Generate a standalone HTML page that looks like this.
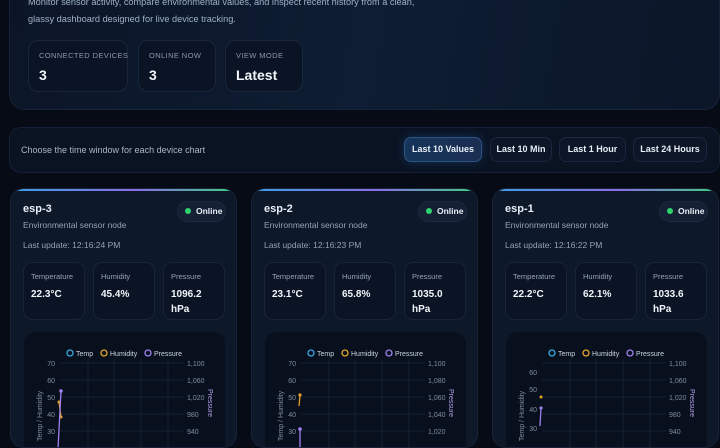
<!DOCTYPE html>
<html><head><meta charset="utf-8"><style>
*{box-sizing:border-box;margin:0;padding:0}
body{width:720px;height:432px;overflow:hidden;background:#060b15;font-family:"Liberation Sans",sans-serif;color:#e8eef7;position:relative}
.abs{position:absolute}
.hero{left:9px;top:-20px;width:711px;height:130px;border-radius:16px;border:1px solid #16243a;background:linear-gradient(100deg,#0b1526 0%,#0e1d33 50%,#0b1628 100%)}
.desc{left:28px;top:-6px;font-size:9.2px;line-height:17px;color:#9fb0c6;white-space:nowrap}
.stat{top:40px;height:52px;border:1px solid #18263b;border-radius:10px;background:#0b1424}
.stat .l{position:absolute;left:10px;top:10px;font-size:7.5px;letter-spacing:.4px;color:#8898ad;white-space:nowrap}
.stat .v{position:absolute;left:10px;top:26px;font-size:14px;font-weight:bold;color:#f2f6fb}
.filter{left:9px;top:127px;width:711px;height:46px;border-radius:12px;border:1px solid #142136;background:#0a1322}
.ftxt{left:21px;top:145px;font-size:9px;color:#a9b7c9}
.btn{top:137px;height:25px;border-radius:7px;border:1px solid #1a2740;background:#0c1627;font-size:9px;font-weight:bold;color:#e8eef7;text-align:center;line-height:23px}
.btn.on{background:linear-gradient(90deg,#16355a,#1a2e52);border-color:#2c5480;box-shadow:0 0 10px rgba(40,100,180,.35)}
.card{top:188px;width:227px;height:260px;border-radius:14px;background:#0d1829;border:1px solid #17243a;overflow:hidden}
.card .bar{position:absolute;left:0;top:0;width:100%;height:2px;background:linear-gradient(90deg,#3aa0e6,#8c6be8 55%,#3ccf7c)}
.card .t{position:absolute;left:12px;top:14px;font-size:11px;font-weight:bold}
.card .s{position:absolute;left:12px;top:31px;font-size:8.5px;color:#93a3b8}
.card .u{position:absolute;left:12px;top:51px;font-size:8.5px;color:#93a3b8}
.pill{position:absolute;left:166px;top:12px;width:49px;height:21px;border-radius:11px;background:#142033;border:1px solid #1c2a40;font-size:8.5px;font-weight:bold;line-height:19px;padding-left:18px}
.pill:before{content:"";position:absolute;left:7px;top:6px;width:6px;height:6px;border-radius:50%;background:#2fd36b}
.m{position:absolute;top:73px;width:62px;height:58px;border-radius:9px;border:1px solid #17243a;background:#0b1424}
.m .l{position:absolute;left:7px;top:9px;font-size:7.5px;color:#93a3b8}
.m .v{position:absolute;left:7px;top:24px;font-size:10px;font-weight:bold;line-height:15px;color:#f2f6fb}
.ch{position:absolute;left:13px;top:143px;width:201px;height:130px;border-radius:12px;background:#08101d}
svg{position:absolute;left:0;top:0}
</style></head><body>
<div class="abs hero"></div>
<div class="abs desc">Monitor sensor activity, compare environmental values, and inspect recent history from a clean,<br>glassy dashboard designed for live device tracking.</div>
<div class="abs stat" style="left:28px;width:100px"><div class="l">CONNECTED DEVICES</div><div class="v">3</div></div>
<div class="abs stat" style="left:138px;width:78px"><div class="l">ONLINE NOW</div><div class="v">3</div></div>
<div class="abs stat" style="left:225px;width:78px"><div class="l">VIEW MODE</div><div class="v">Latest</div></div>

<div class="abs filter"></div>
<div class="abs ftxt">Choose the time window for each device chart</div>
<div class="abs btn on" style="left:404px;width:78px">Last 10 Values</div>
<div class="abs btn" style="left:490px;width:62px">Last 10 Min</div>
<div class="abs btn" style="left:559px;width:67px">Last 1 Hour</div>
<div class="abs btn" style="left:633px;width:74px">Last 24 Hours</div>

<!-- card 1 -->
<div class="abs card" style="left:10px">
<div class="bar"></div><div class="t">esp-3</div><div class="pill">Online</div>
<div class="s">Environmental sensor node</div><div class="u">Last update: 12:16:24 PM</div>
<div class="m" style="left:12px"><div class="l">Temperature</div><div class="v">22.3°C</div></div>
<div class="m" style="left:82px"><div class="l">Humidity</div><div class="v">45.4%</div></div>
<div class="m" style="left:152px"><div class="l">Pressure</div><div class="v">1096.2<br>hPa</div></div>
<div class="ch"></div>
<svg width="227" height="260" font-family="Liberation Sans" font-size="7" fill="#7f8da1">
<g stroke="#142033" stroke-width="1"><line x1="49" y1="174" x2="173" y2="174"/><line x1="49" y1="191" x2="173" y2="191"/><line x1="49" y1="208" x2="173" y2="208"/><line x1="49" y1="225" x2="173" y2="225"/><line x1="49" y1="242" x2="173" y2="242"/><line x1="77" y1="170" x2="77" y2="260"/><line x1="103" y1="170" x2="103" y2="260"/><line x1="130" y1="170" x2="130" y2="260"/><line x1="157" y1="170" x2="157" y2="260"/></g>
<g text-anchor="end"><text x="44" y="177">70</text><text x="44" y="194">60</text><text x="44" y="211">50</text><text x="44" y="228">40</text><text x="44" y="245">30</text></g>
<g><text x="176" y="177">1,100</text><text x="176" y="194">1,060</text><text x="176" y="211">1,020</text><text x="176" y="228">980</text><text x="176" y="245">940</text></g>
<g fill="none" stroke-width="1.3"><circle cx="59" cy="164" r="3" stroke="#38a8e0"/><circle cx="93" cy="164" r="3" stroke="#e8a22c"/><circle cx="137" cy="164" r="3" stroke="#a080f0"/></g>
<g fill="#c9d3e0" font-size="7"><text x="65" y="167">Temp</text><text x="99" y="167">Humidity</text><text x="143" y="167">Pressure</text></g>
<text transform="translate(31,252) rotate(-90)" font-size="7">Temp / Humidity</text>
<text transform="translate(197,200) rotate(90)" font-size="7" fill="#b0a0e8">Pressure</text>
<polyline points="48,213 50,228" stroke="#e8a22c" stroke-width="1.3" fill="none"/><circle cx="48" cy="213" r="1.5" fill="#e8a22c"/><circle cx="50" cy="228" r="1.5" fill="#e8a22c"/>
<polyline points="50,202 47,260" stroke="#a080f0" stroke-width="1.3" fill="none"/><circle cx="50" cy="202" r="1.8" fill="#a080f0"/>
</svg>
</div>

<!-- card 2 -->
<div class="abs card" style="left:251px">
<div class="bar"></div><div class="t">esp-2</div><div class="pill">Online</div>
<div class="s">Environmental sensor node</div><div class="u">Last update: 12:16:23 PM</div>
<div class="m" style="left:12px"><div class="l">Temperature</div><div class="v">23.1°C</div></div>
<div class="m" style="left:82px"><div class="l">Humidity</div><div class="v">65.8%</div></div>
<div class="m" style="left:152px"><div class="l">Pressure</div><div class="v">1035.0<br>hPa</div></div>
<div class="ch"></div>
<svg width="227" height="260" font-family="Liberation Sans" font-size="7" fill="#7f8da1">
<g stroke="#142033" stroke-width="1"><line x1="49" y1="174" x2="173" y2="174"/><line x1="49" y1="191" x2="173" y2="191"/><line x1="49" y1="208" x2="173" y2="208"/><line x1="49" y1="225" x2="173" y2="225"/><line x1="49" y1="242" x2="173" y2="242"/><line x1="77" y1="170" x2="77" y2="260"/><line x1="103" y1="170" x2="103" y2="260"/><line x1="130" y1="170" x2="130" y2="260"/><line x1="157" y1="170" x2="157" y2="260"/></g>
<g text-anchor="end"><text x="44" y="177">70</text><text x="44" y="194">60</text><text x="44" y="211">50</text><text x="44" y="228">40</text><text x="44" y="245">30</text></g>
<g><text x="176" y="177">1,100</text><text x="176" y="194">1,080</text><text x="176" y="211">1,060</text><text x="176" y="228">1,040</text><text x="176" y="245">1,020</text></g>
<g fill="none" stroke-width="1.3"><circle cx="59" cy="164" r="3" stroke="#38a8e0"/><circle cx="93" cy="164" r="3" stroke="#e8a22c"/><circle cx="137" cy="164" r="3" stroke="#a080f0"/></g>
<g fill="#c9d3e0" font-size="7"><text x="65" y="167">Temp</text><text x="99" y="167">Humidity</text><text x="143" y="167">Pressure</text></g>
<text transform="translate(31,252) rotate(-90)" font-size="7">Temp / Humidity</text>
<text transform="translate(197,200) rotate(90)" font-size="7" fill="#b0a0e8">Pressure</text>
<polyline points="48,206 47,217" stroke="#e8a22c" stroke-width="1.3" fill="none"/><circle cx="48" cy="206" r="1.6" fill="#e8a22c"/>
<polyline points="48,240 48,260" stroke="#a080f0" stroke-width="1.3" fill="none"/><circle cx="48" cy="240" r="1.8" fill="#a080f0"/>
</svg>
</div>

<!-- card 3 -->
<div class="abs card" style="left:492px">
<div class="bar"></div><div class="t">esp-1</div><div class="pill">Online</div>
<div class="s">Environmental sensor node</div><div class="u">Last update: 12:16:22 PM</div>
<div class="m" style="left:12px"><div class="l">Temperature</div><div class="v">22.2°C</div></div>
<div class="m" style="left:82px"><div class="l">Humidity</div><div class="v">62.1%</div></div>
<div class="m" style="left:152px"><div class="l">Pressure</div><div class="v">1033.6<br>hPa</div></div>
<div class="ch"></div>
<svg width="227" height="260" font-family="Liberation Sans" font-size="7" fill="#7f8da1">
<g stroke="#142033" stroke-width="1"><line x1="49" y1="174" x2="173" y2="174"/><line x1="49" y1="191" x2="173" y2="191"/><line x1="49" y1="208" x2="173" y2="208"/><line x1="49" y1="225" x2="173" y2="225"/><line x1="49" y1="242" x2="173" y2="242"/><line x1="77" y1="170" x2="77" y2="260"/><line x1="103" y1="170" x2="103" y2="260"/><line x1="130" y1="170" x2="130" y2="260"/><line x1="157" y1="170" x2="157" y2="260"/></g>
<g text-anchor="end"><text x="44" y="186">60</text><text x="44" y="203">50</text><text x="44" y="223">40</text><text x="44" y="242">30</text></g>
<g><text x="176" y="177">1,100</text><text x="176" y="194">1,060</text><text x="176" y="211">1,020</text><text x="176" y="228">980</text><text x="176" y="245">940</text></g>
<g fill="none" stroke-width="1.3"><circle cx="59" cy="164" r="3" stroke="#38a8e0"/><circle cx="93" cy="164" r="3" stroke="#e8a22c"/><circle cx="137" cy="164" r="3" stroke="#a080f0"/></g>
<g fill="#c9d3e0" font-size="7"><text x="65" y="167">Temp</text><text x="99" y="167">Humidity</text><text x="143" y="167">Pressure</text></g>
<text transform="translate(31,252) rotate(-90)" font-size="7">Temp / Humidity</text>
<text transform="translate(197,200) rotate(90)" font-size="7" fill="#b0a0e8">Pressure</text>
<circle cx="48" cy="208" r="1.5" fill="#e8a22c"/>
<polyline points="48,219 47,237" stroke="#a080f0" stroke-width="1.3" fill="none"/><circle cx="48" cy="219" r="1.6" fill="#a080f0"/>
</svg>
</div>
</body></html>
